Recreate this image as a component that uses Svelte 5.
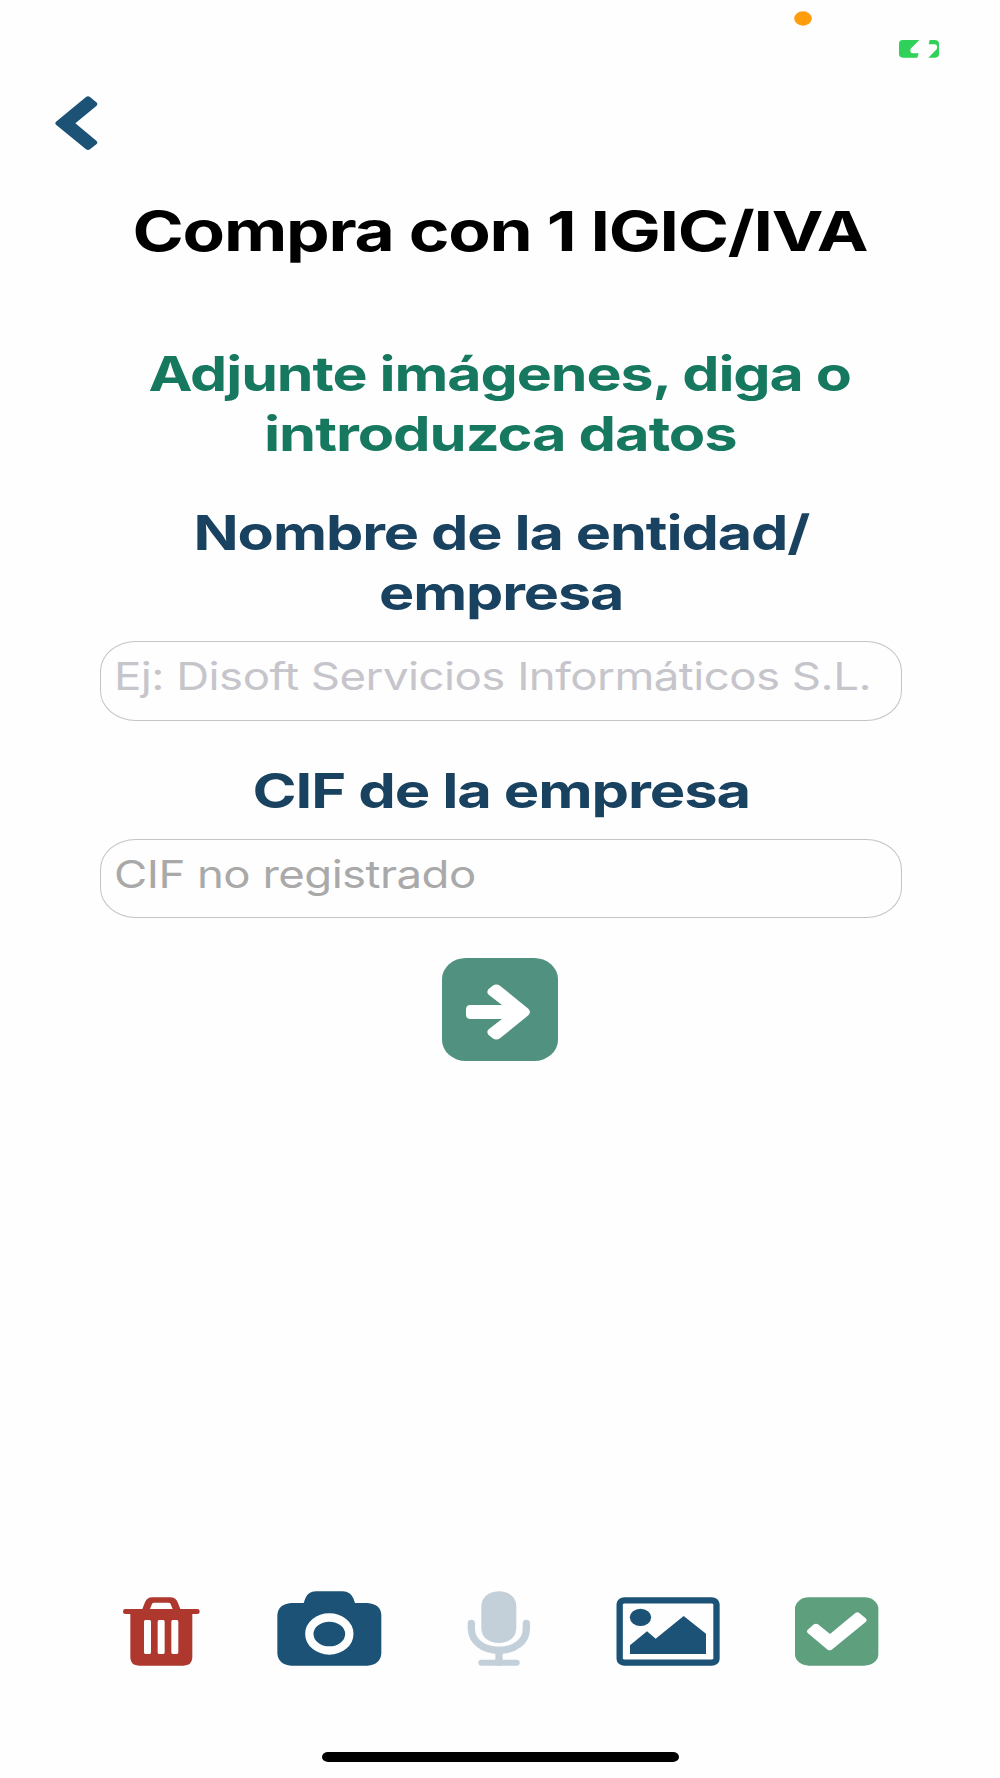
<script>
  const title = { text: 'Compra con 1 IGIC/IVA', width: 735 };
  const intro = [
    { text: 'Adjunte imágenes, diga o', width: 702 },
    { text: 'introduzca datos', width: 473 },
  ];
  const nameLabel = [
    { text: 'Nombre de la entidad/', width: 616 },
    { text: 'empresa', width: 244 },
  ];
  const cifLabel = [{ text: 'CIF de la empresa', width: 498 }];

  // Stretches a line horizontally to the given width, for the wide lettering.
  function stretch(node, width) {
    const apply = () => {
      node.style.transform = `scaleX(${width / node.offsetWidth})`;
    };
    apply();
    document.fonts?.ready.then(apply);
  }
</script>

<main class="screen">
  <header class="status">
    <svg class="dot" viewBox="0 0 18 15"><ellipse cx="9" cy="7.5" rx="8.8" ry="7.2" /></svg>
    <svg class="battery" viewBox="417 121 120 53">
      <path d="M428 121H478L452 147Q448 160 459 161H476L472 174H428Q417 173 417 163V132Q417 122 428 121Z" />
      <path d="M509 121H524Q537 122 537 132V163Q537 173 526 174H505L530 149Q535 136 524 134H506Z" />
    </svg>
  </header>

  <nav class="nav">
    <button aria-label="Volver">
      <svg class="back" viewBox="163 289 128 163">
        <path d="M256 292Q262 288 268 292L287 308Q293 313 287 319L224 371L287 423Q293 429 287 434L268 449Q262 453 256 449L166 375Q161 371 166 366Z" />
      </svg>
    </button>
  </nav>

  <h1><span class="line" use:stretch={title.width}>{title.text}</span></h1>

  {#snippet lines(items)}
    {#each items as item}
      <span class="line" use:stretch={item.width}>{item.text}</span>
    {/each}
  {/snippet}

  <h2 class="intro">{@render lines(intro)}</h2>

  <section class="form">
    <h2>{@render lines(nameLabel)}</h2>
    <div class="field"><span class="line" use:stretch={757}>Ej: Disoft Servicios Informáticos S.L.</span></div>
    <h2 class="second">{@render lines(cifLabel)}</h2>
    <div class="field dark"><span class="line" use:stretch={362}>CIF no registrado</span></div>
  </section>

  <button class="next" aria-label="Siguiente">
    <svg viewBox="66 55 348 309">
      <path d="M152 196H246L206 165Q198 157 206 148L218 138Q229 131 240 138L325 207Q335 217 325 227L240 296Q229 303 218 296L206 286Q198 277 206 269L246 238H152Q138 238 138 225V209Q138 196 152 196Z" />
    </svg>
  </button>

  <footer class="tools">
    <svg class="trash" viewBox="69 60 230 230">
      <path fill-rule="evenodd" d="M127 117L135 97Q141 82 157 82H211Q227 82 233 97L241 117H292Q299 117 299 124Q299 132 292 132H277V263Q276 286 250 287H117Q92 286 91 263V132H76Q69 132 69 124Q69 117 76 117ZM150 117H218L212 102Q210 98 206 98H162Q158 98 156 102ZM136 150Q132 150 132 155V247Q132 252 136 252H149Q153 252 153 247V155Q153 150 149 150ZM177 150Q173 150 173 155V247Q173 252 177 252H190Q194 252 194 247V155Q194 150 190 150ZM218 150Q214 150 214 155V247Q214 252 218 252H231Q235 252 235 247V155Q235 150 231 150Z" />
    </svg>
    <svg class="camera" viewBox="532 60 313 230">
      <path d="M575 99H612L617 85Q624 65 649 64H729Q753 65 761 85L766 99H803Q844 102 845 135V250Q843 284 803 287H575Q535 284 533 250V135Q535 102 575 99Z" />
      <ellipse cx="689" cy="192" rx="60" ry="49.500" />
    </svg>
    <svg class="mic" viewBox="80 60 190 230">
      <path d="M123 108Q126 67 176 64Q226 67 228 108V176Q225 216 176 219Q126 216 123 176Z" />
      <path class="stroke" d="M93 160V177C94 215 129 241 176 241S258 215 258 177V160" />
      <path class="stroke" d="M176 241V277" />
      <path class="base" d="M123 278H229" />
    </svg>
    <svg class="image" viewBox="527 60 313 230">
      <rect x="538" y="91" width="290.500" height="187" rx="14" ry="11" />
      <ellipse cx="600.500" cy="142" rx="32" ry="26" />
      <path d="M569 226L620 184L646 206L730 138L797 191V252H569Z" />
    </svg>
    <svg class="check" viewBox="107 60 250 230">
      <rect x="107" y="82" width="250" height="205" rx="42" ry="34" />
      <path d="M164 163Q170 160 176 163L212 192L288 129Q294 125 300 129L319 145Q325 151 319 156L217 239Q211 243 205 239L145 189Q140 184 145 179Z" />
    </svg>
  </footer>

  <div class="home"></div>
</main>

<style>
  :global(body) {
    background: #fefefe;
  }

  .screen {
    box-sizing: border-box;
    width: 1000px;
    height: 1778px;
    display: flex;
    flex-direction: column;
    align-items: center;
    overflow: hidden;
    background: #fefefe;
    font-family: Inter, 'Liberation Sans', sans-serif;
  }

  svg {
    display: block;
    overflow: visible;
  }

  button {
    padding: 0;
    border: 0;
    background: none;
  }

  .status {
    box-sizing: border-box;
    align-self: stretch;
    height: 96px;
    padding: 10.500px 61px 0 794px;
    display: flex;
    justify-content: space-between;
    flex: none;
  }

  .dot {
    width: 18px;
    height: 15px;
    fill: #ff9d0a;
  }

  .battery {
    width: 40px;
    height: 17.700px;
    margin-top: 29.800px;
    fill: #30d158;
  }

  .nav {
    align-self: stretch;
    height: 100.600px;
    padding-left: 54.600px;
    flex: none;
  }

  .back {
    width: 42.700px;
    height: 54.300px;
    fill: #1b5276;
  }

  h1,
  h2 {
    margin: 0;
    display: flex;
    flex-direction: column;
    align-items: center;
    flex: none;
    font-weight: 700;
    letter-spacing: -0.018em;
  }

  h1 {
    height: 147.700px;
    font-size: 55.500px;
    line-height: 68px;
    color: #000;
  }

  h2 {
    font-size: 48px;
    line-height: 59.500px;
    color: #18425f;
  }

  .line {
    display: inline-block;
    white-space: nowrap;
  }

  .intro {
    color: #16795f;
    margin-bottom: 40px;
  }

  .form {
    width: 802px;
    margin-left: 2px;
    flex: none;
  }

  .field {
    box-sizing: border-box;
    height: 79.500px;
    margin-top: 18.800px;
    padding: 10.300px 0 0 13px;
    border: 1.500px solid #c4c4c4;
    border-radius: 36px / 30px;
    font-size: 38.500px;
    line-height: 48px;
    letter-spacing: -0.012em;
    color: #c6c5cb;
  }

  .field .line {
    transform-origin: left;
  }

  .field.dark {
    color: #a9a9a9;
  }

  .second {
    margin-top: 40px;
  }

  .next {
    width: 116px;
    height: 103px;
    margin-top: 39.500px;
    flex: none;
    border-radius: 24px / 21px;
    background: #519180;
  }

  .next svg {
    width: 116px;
    height: 103px;
    fill: #fff;
  }

  .tools {
    align-self: stretch;
    margin-top: auto;
    padding: 0 121px 0 123px;
    display: flex;
    flex: none;
  }

  .tools svg {
    height: 76.667px;
    flex: none;
    fill: #1b5276;
  }

  .tools .trash {
    width: 76.667px;
    fill: #af382e;
  }

  .camera,
  .image {
    width: 104.333px;
  }

  .camera {
    margin-left: 77.600px;
  }

  .image {
    margin-left: 85.300px;
  }

  .camera ellipse {
    stroke: #fefefe;
    stroke-width: 25;
  }

  .tools .mic {
    width: 63.333px;
    margin-left: 85.300px;
    fill: #c3d0da;
  }

  .stroke,
  .base {
    fill: none;
    stroke: #c3d0da;
    stroke-width: 22;
    stroke-linecap: round;
  }

  .base {
    stroke-width: 18;
  }

  .image rect {
    fill: none;
    stroke: #1b5276;
    stroke-width: 19;
  }

  .check {
    width: 83.333px;
    margin-left: 75.500px;
  }

  .check rect {
    fill: #5e9f7d;
  }

  .check path {
    fill: #fff;
  }

  .home {
    width: 357px;
    height: 10px;
    margin: 85.300px 0 16px;
    flex: none;
    border-radius: 6px / 5px;
    background: #000;
  }
</style>
